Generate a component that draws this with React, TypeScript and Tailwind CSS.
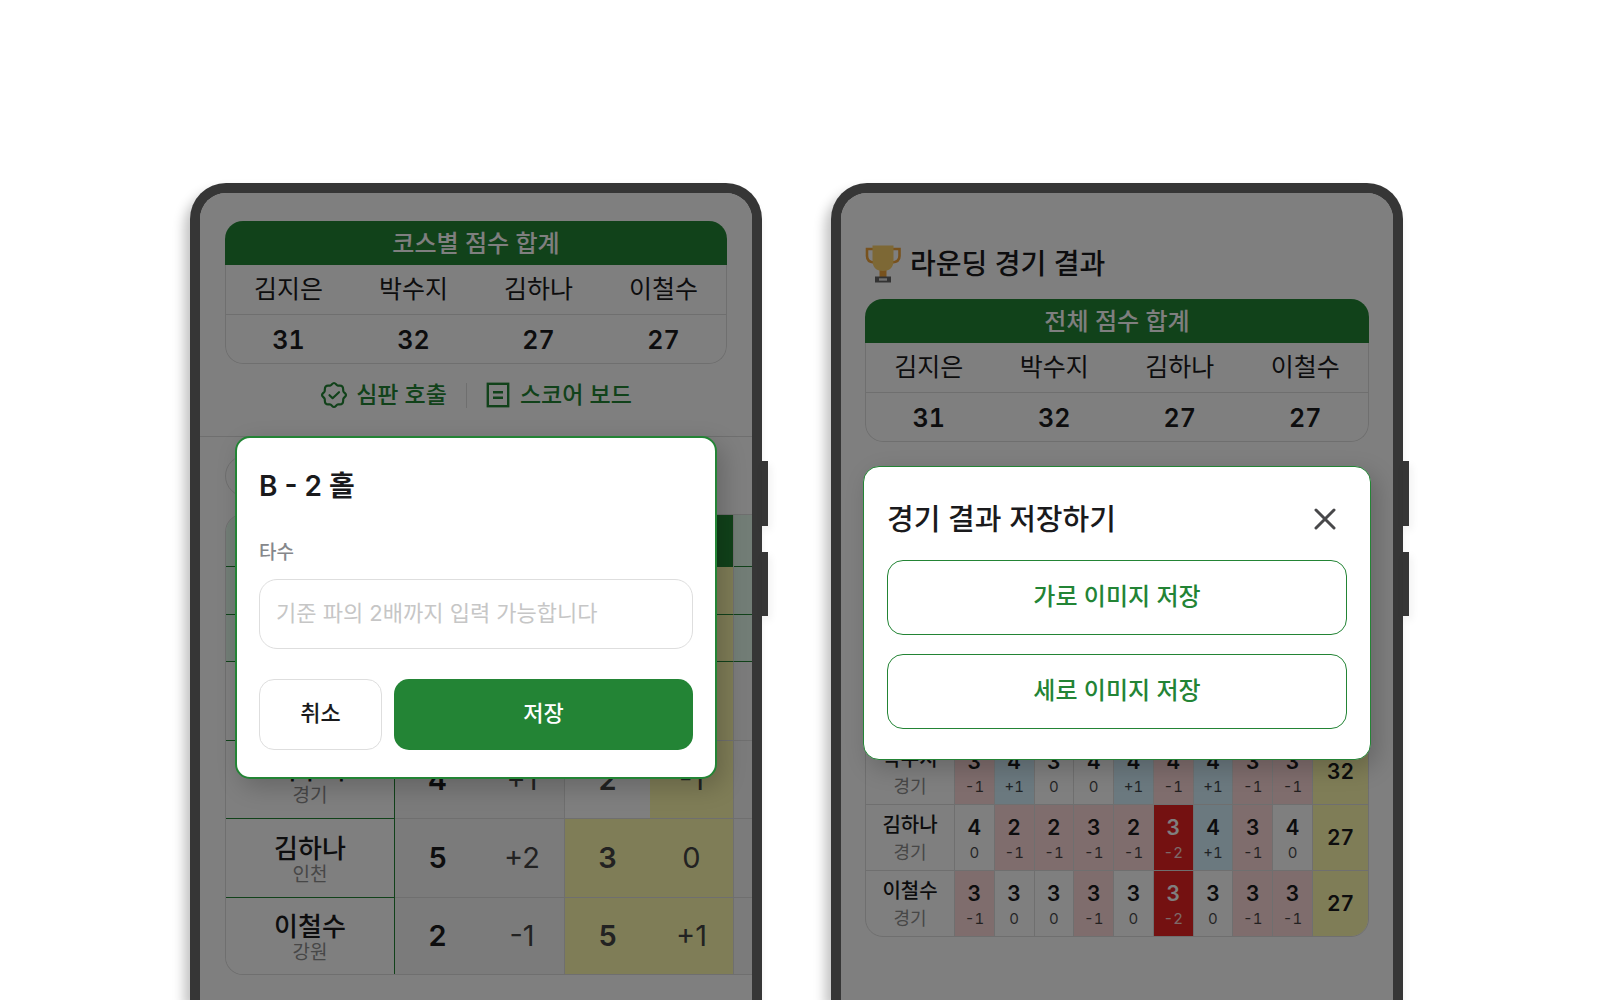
import type { ReactNode } from 'react';

const PLAYERS = ['김지은', '박수지', '김하나', '이철수'];
const TOTALS = [31, 32, 27, 27];

function Phone({ children, dialog }: { children: ReactNode; dialog: ReactNode }) {
  return (
    <section className="relative flex w-full max-w-[572px] flex-col rounded-t-[36px] bg-[#363636] px-[10px] pt-[10px] shadow-[-6px_8px_12px_rgba(0,0,0,0.24)]">
      <span className="absolute top-[278px] -right-[6px] h-[65px] w-[6px] bg-[#363636] shadow-[2px_4px_8px_rgba(0,0,0,0.08)]" />
      <span className="absolute top-[369px] -right-[6px] h-[64px] w-[6px] bg-[#363636] shadow-[2px_4px_8px_rgba(0,0,0,0.08)]" />
      <div className="relative flex-1 overflow-hidden rounded-t-[26px] bg-white">
        {children}
        <div className="absolute inset-0 bg-black/50">{dialog}</div>
      </div>
    </section>
  );
}

function SummaryCard({ title }: { title: string }) {
  return (
    <div className="overflow-hidden rounded-[18px]">
      <h2 className="flex h-[44px] items-center justify-center bg-[#238435] pt-px text-[24px] font-medium text-white">
        {title}
      </h2>
      <div className="rounded-b-[18px] border-x border-b border-[#dedede]">
        <table className="w-full table-fixed border-separate border-spacing-0 text-center text-[#1a1a1c]">
          <thead>
            <tr>
              {PLAYERS.map((name) => (
                <th key={name} scope="col" className="h-[50px] border-b border-[#dedede] p-0 text-[25px] font-normal">
                  {name}
                </th>
              ))}
            </tr>
          </thead>
          <tbody>
            <tr>
              {TOTALS.map((total, i) => (
                <td key={PLAYERS[i]} className="h-[48px] p-0 pt-[2px] text-[25px] leading-[30px] font-semibold tabular-nums">
                  {total}
                </td>
              ))}
            </tr>
          </tbody>
        </table>
      </div>
    </div>
  );
}

function BadgeCheckIcon() {
  return (
    <svg width="28" height="28" viewBox="0 0 28 28" fill="none" stroke="currentColor" strokeWidth="2.2" strokeLinejoin="round" strokeLinecap="round" aria-hidden="true">
      <path d="M14 2 C15.6 2 16.2 4 17.6 4.5 C19 5 20.8 3.8 22.2 5.4 C23.8 7 22.8 8.8 23.4 10.4 C24 11.8 26 12.4 26 14 C26 15.6 24 16.2 23.4 17.6 C22.8 19.2 23.8 21 22.2 22.6 C20.8 24.2 19 23 17.6 23.5 C16.2 24 15.6 26 14 26 C12.4 26 11.8 24 10.4 23.5 C9 23 7.2 24.2 5.8 22.6 C4.2 21 5.2 19.2 4.6 17.6 C4 16.2 2 15.6 2 14 C2 12.4 4 11.8 4.6 10.4 C5.2 8.8 4.2 7 5.8 5.4 C7.2 3.8 9 5 10.4 4.5 C11.8 4 12.4 2 14 2 Z" />
      <path d="M9.5 14.2 L12.6 17.2 L19 11.2" />
    </svg>
  );
}

function BoardIcon() {
  return (
    <svg width="24" height="26" viewBox="0 0 24 26" fill="none" stroke="currentColor" strokeWidth="2.4" aria-hidden="true">
      <rect x="1.8" y="1.8" width="20.4" height="22.4" />
      <path d="M7 10.3 H17 M7 15.7 H17" />
    </svg>
  );
}

function TrophyIcon() {
  return (
    <svg width="36" height="38" viewBox="0 0 36 38" fill="none" aria-hidden="true">
      <path d="M8 4 H2 V11 Q2 17 9 17.5" stroke="#f0a43c" strokeWidth="2.6" />
      <path d="M28 4 H34.5 V11 Q34.5 17 27 17.5" stroke="#f0a43c" strokeWidth="2.6" />
      <path d="M14.5 22 H21.5 V32 H14.5 Z" fill="#f0a43c" />
      <path d="M7.5 0.5 H28.5 V15 Q28.5 26 18 26 Q7.5 26 7.5 15 Z" fill="#fbd06a" />
      <path d="M10 31.5 H26 V37.5 H10 Z" fill="#666" />
      <path d="M14 33.3 H22 V35.7 H14 Z" fill="#e0e0e0" />
    </svg>
  );
}

type HoleScore = [number, string];
const COURSE_ROWS: { name: string; region: string; b1: HoleScore; b2: HoleScore; entered: boolean; size: string }[] = [
  { name: '박수지', region: '경기', b1: [4, '+1'], b2: [2, '-1'], entered: false, size: 'h-[78px]' },
  { name: '김하나', region: '인천', b1: [5, '+2'], b2: [3, '0'], entered: true, size: 'h-[79px]' },
  { name: '이철수', region: '강원', b1: [2, '-1'], b2: [5, '+1'], entered: true, size: 'h-[76px] [&>*]:border-b-0' },
];

function CourseTable() {
  const head = 'border-b border-b-[#238435] bg-[#e4fbec] p-0';
  const selected = 'border-r border-b border-r-[#dedede] bg-[#fffaae] p-0';
  return (
    <div className="ml-[25px] overflow-hidden rounded-l-[18px] border-y border-l border-[#dedede]">
      <table className="w-full table-fixed border-separate border-spacing-0 text-center text-[#1a1a1c]">
        <colgroup>
          <col className="w-[169px]" />
          <col className="w-[85px]" />
          <col className="w-[85px]" />
          <col className="w-[85px]" />
          <col className="w-[84px]" />
          <col />
        </colgroup>
        <thead>
          <tr className="h-[52px]">
            <th className={`${head} border-r border-r-[#238435]`} />
            <th colSpan={2} className={`${head} border-r border-r-[#dedede]`} />
            <th colSpan={2} className="border-r border-r-[#dedede] bg-[#238435] p-0" />
            <th className={head} />
          </tr>
          <tr className="h-[48px]">
            <th className={`${head} border-r border-r-[#238435]`} />
            <th colSpan={2} className={`${head} border-r border-r-[#dedede]`} />
            <th colSpan={2} className={`${selected} border-b-[#238435]`} />
            <th className={head} />
          </tr>
          <tr className="h-[47px]">
            <th className={`${head} border-r border-r-[#238435]`} />
            <th colSpan={2} className={`${head} border-r border-r-[#dedede]`} />
            <th colSpan={2} className={`${selected} border-b-[#238435]`} />
            <th className={head} />
          </tr>
        </thead>
        <tbody>
          <tr className="h-[79px]">
            <th className="border-r border-b border-[#238435] bg-white p-0" />
            <td colSpan={2} className="border-r border-b border-[#dedede] bg-[#f6f6f6] p-0" />
            <td colSpan={2} className={`${selected} border-b-[#dedede]`} />
            <td className="border-b border-[#dedede] bg-[#f6f6f6] p-0" />
          </tr>
          {COURSE_ROWS.map((row) => (
            <tr key={row.name} className={row.size}>
              <th scope="row" className="border-r border-b border-[#238435] bg-white p-0 pt-[3px]">
                <div className="text-[26px] leading-[30px] font-medium">{row.name}</div>
                <div className="text-[19px] leading-[22px] font-normal text-[#8e8e8e]">{row.region}</div>
              </th>
              <td className="border-b border-[#dedede] bg-[#f6f6f6] p-0 text-[29px] font-semibold">{row.b1[0]}</td>
              <td className="border-r border-b border-[#dedede] bg-[#f6f6f6] p-0 text-[29px] text-[#444]">{row.b1[1]}</td>
              <td className={`border-b border-[#dedede] p-0 text-[29px] font-semibold text-[#444] ${row.entered ? 'bg-[#fffaae]' : 'bg-white'}`}>
                {row.b2[0]}
              </td>
              <td className="border-r border-b border-[#dedede] bg-[#fffaae] p-0 text-[29px] text-[#444]">{row.b2[1]}</td>
              <td className="border-b border-[#dedede] bg-[#f6f6f6] p-0" />
            </tr>
          ))}
        </tbody>
      </table>
    </div>
  );
}

function HoleDialog() {
  return (
    <form
      role="dialog"
      aria-labelledby="hole-title"
      className="mx-[35px] mt-[243px] rounded-[15px] border-2 border-[#238435] bg-white px-[22px] pt-[28px] pb-[27px] shadow-[6px_8px_24px_rgba(0,0,0,0.2)]"
    >
      <h2 id="hole-title" className="text-[28px] leading-[40px] font-semibold text-[#1a1a1c]">B - 2 홀</h2>
      <label htmlFor="strokes" className="mt-[32px] block text-[19px] leading-[30px] font-medium text-[#85878b]">타수</label>
      <input
        id="strokes"
        inputMode="numeric"
        placeholder="기준 파의 2배까지 입력 가능합니다"
        className="mt-[11px] block h-[70px] w-full rounded-[18px] border border-[#dedede] px-4 pb-[2px] text-[22px] placeholder:text-[#c6c6c6]"
      />
      <div className="mt-[30px] flex gap-3">
        <button type="button" className="h-[71px] w-[123px] rounded-[15px] border border-[#dedede] pb-[2px] text-[22px] font-medium text-[#1a1a1c]">
          취소
        </button>
        <button type="button" className="h-[71px] flex-1 rounded-[15px] bg-[#238435] pb-[2px] text-[22px] font-medium text-white">
          저장
        </button>
      </div>
    </form>
  );
}

type Result = { name: string; region: string; scores: number[]; diffs: number[]; total: number; size: string };
const RESULTS: Result[] = [
  { name: '박수지', region: '경기', scores: [3, 4, 3, 4, 4, 4, 4, 3, 3], diffs: [-1, 1, 0, 0, 1, -1, 1, -1, -1], total: 32, size: 'h-[66px]' },
  { name: '김하나', region: '경기', scores: [4, 2, 2, 3, 2, 3, 4, 3, 4], diffs: [0, -1, -1, -1, -1, -2, 1, -1, 0], total: 27, size: 'h-[66px]' },
  { name: '이철수', region: '경기', scores: [3, 3, 3, 3, 3, 3, 3, 3, 3], diffs: [-1, 0, 0, -1, 0, -2, 0, -1, -1], total: 27, size: 'h-[65px] [&>*]:border-b-0' },
];

const tone = (diff: number) => {
  if (diff <= -2) return 'bg-[#e82222] text-white';
  if (diff === -1) return 'bg-[#ffdada]';
  if (diff > 0) return 'bg-[#d6f2ff]';
  return 'bg-white';
};

function ResultTable() {
  return (
    <div className="mt-[200px] overflow-hidden rounded-[18px] border border-[#dedede]">
      <table className="w-full table-fixed border-separate border-spacing-0 text-center text-[#1a1a1c] tabular-nums">
        <colgroup>
          <col className="w-[89px]" />
          <col span={9} />
          <col className="w-[55px]" />
        </colgroup>
        <thead className="bg-[#238435]">
          <tr className="h-[96px]">
            <th colSpan={11} />
          </tr>
        </thead>
        <tbody>
          {RESULTS.map((row) => (
            <tr key={row.name} className={row.size}>
              <th scope="row" className="border-r border-b border-[#dedede] p-0 pt-[3px]">
                <div className="text-[20px] leading-[28px] font-medium">{row.name}</div>
                <div className="text-[18px] leading-[28px] font-normal text-[#8e8e8e]">{row.region}</div>
              </th>
              {row.scores.map((score, i) => (
                <td key={i} className={`border-r border-b border-[#dedede] p-0 pt-[5px] ${tone(row.diffs[i])}`}>
                  <div className="text-[21px] leading-[26px] font-semibold">{score}</div>
                  <div className="text-[15px] leading-[24px] opacity-80">
                    {row.diffs[i] > 0 ? `+${row.diffs[i]}` : row.diffs[i]}
                  </div>
                </td>
              ))}
              <td className="border-b border-[#dedede] bg-[#fffaae] p-0 text-[21px] font-semibold">{row.total}</td>
            </tr>
          ))}
        </tbody>
      </table>
    </div>
  );
}

function SaveDialog() {
  const option =
    'h-[75px] w-full rounded-[16px] border border-[#238435] pb-[2px] text-[24px] font-medium text-[#238435]';
  return (
    <div
      role="dialog"
      aria-labelledby="save-title"
      className="mx-[22px] mt-[273px] rounded-[16px] border border-[#238435] bg-white px-[23px] pt-[31px] pb-[30px] shadow-[6px_8px_24px_rgba(0,0,0,0.2)]"
    >
      <div className="flex h-[42px] items-center justify-between pr-[11px]">
        <h2 id="save-title" className="pt-[2px] text-[29px] leading-[42px] font-medium text-[#1a1a1c]">경기 결과 저장하기</h2>
        <button type="button" aria-label="닫기" className="text-[#48484a]">
          <svg width="22" height="22" viewBox="0 0 22 22" fill="none" stroke="currentColor" strokeWidth="3" strokeLinecap="round" aria-hidden="true">
            <path d="M2 2 L20 20 M20 2 L2 20" />
          </svg>
        </button>
      </div>
      <div className="mt-[20px] flex flex-col gap-[19px]">
        <button type="button" className={option}>가로 이미지 저장</button>
        <button type="button" className={option}>세로 이미지 저장</button>
      </div>
    </div>
  );
}

export default function App() {
  return (
    <main className="flex h-screen justify-center gap-[69px] overflow-hidden bg-white pt-[183px] pr-[7px] font-['Inter','Noto_Sans_CJK_KR',sans-serif]">
      <Phone dialog={<HoleDialog />}>
        <header className="border-b border-[#dedede] px-[25px] pt-[28px] pb-[10px]">
          <SummaryCard title="코스별 점수 합계" />
          <div className="flex h-[62px] items-center justify-center gap-[19px] text-[23px] font-medium text-[#238435]">
            <button type="button" className="flex items-center gap-2">
              <BadgeCheckIcon />
              심판 호출
            </button>
            <span className="h-[25px] w-px bg-[#dedede]" />
            <button type="button" className="flex items-center gap-[10px]">
              <BoardIcon />
              스코어 보드
            </button>
          </div>
        </header>
        <div className="mt-[18px] mb-[17px] ml-[25px] h-[42px] w-1/2 rounded-full border border-[#dedede]" />
        <CourseTable />
      </Phone>
      <Phone dialog={<SaveDialog />}>
        <div className="px-[24px] pt-[52px]">
          <h1 className="mb-4 flex h-[38px] items-center gap-[9px] text-[28px] font-medium text-[#1a1a1c]">
            <TrophyIcon />
            라운딩 경기 결과
          </h1>
          <SummaryCard title="전체 점수 합계" />
          <ResultTable />
        </div>
      </Phone>
    </main>
  );
}
